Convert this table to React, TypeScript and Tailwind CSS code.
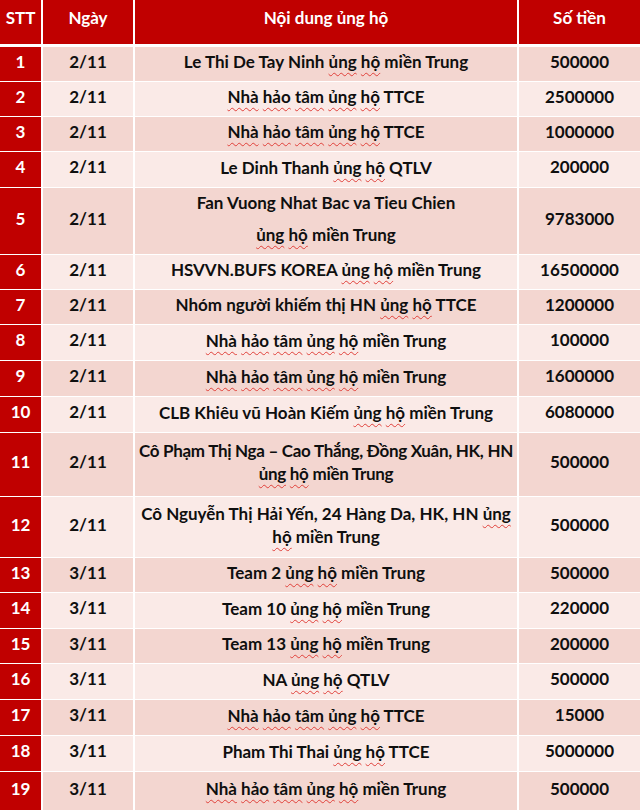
import React from "react";

type Row = { stt: string; date: string; lines: string[]; amount: string; h: number; spaced?: boolean; tight?: boolean };

const rows: Row[] = [
  { stt: "1", date: "2/11", lines: ["Le Thi De Tay Ninh ủng hộ miền Trung"], amount: "500000", h: 34 },
  { stt: "2", date: "2/11", lines: ["Nhà hảo tâm ủng hộ TTCE"], amount: "2500000", h: 34 },
  { stt: "3", date: "2/11", lines: ["Nhà hảo tâm ủng hộ TTCE"], amount: "1000000", h: 34 },
  { stt: "4", date: "2/11", lines: ["Le Dinh Thanh ủng hộ QTLV"], amount: "200000", h: 35 },
  { stt: "5", date: "2/11", lines: ["Fan Vuong Nhat Bac va Tieu Chien", "ủng hộ miền Trung"], amount: "9783000", h: 66, spaced: true },
  { stt: "6", date: "2/11", lines: ["HSVVN.BUFS KOREA ủng hộ miền Trung"], amount: "16500000", h: 34 },
  { stt: "7", date: "2/11", lines: ["Nhóm người khiếm thị HN ủng hộ TTCE"], amount: "1200000", h: 34 },
  { stt: "8", date: "2/11", lines: ["Nhà hảo tâm ủng hộ miền Trung"], amount: "100000", h: 35 },
  { stt: "9", date: "2/11", lines: ["Nhà hảo tâm ủng hộ miền Trung"], amount: "1600000", h: 35 },
  { stt: "10", date: "2/11", lines: ["CLB Khiêu vũ Hoàn Kiếm ủng hộ miền Trung"], amount: "6080000", h: 35 },
  { stt: "11", date: "2/11", lines: ["Cô Phạm Thị Nga – Cao Thắng, Đồng Xuân, HK, HN", "ủng hộ miền Trung"], amount: "500000", h: 63, tight: true },
  { stt: "12", date: "2/11", lines: ["Cô Nguyễn Thị Hải Yến, 24 Hàng Da, HK, HN ủng", "hộ miền Trung"], amount: "500000", h: 60 },
  { stt: "13", date: "3/11", lines: ["Team 2 ủng hộ miền Trung"], amount: "500000", h: 34 },
  { stt: "14", date: "3/11", lines: ["Team 10 ủng hộ miền Trung"], amount: "220000", h: 35 },
  { stt: "15", date: "3/11", lines: ["Team 13 ủng hộ miền Trung"], amount: "200000", h: 34 },
  { stt: "16", date: "3/11", lines: ["NA ủng hộ QTLV"], amount: "500000", h: 35 },
  { stt: "17", date: "3/11", lines: ["Nhà hảo tâm ủng hộ TTCE"], amount: "15000", h: 35 },
  { stt: "18", date: "3/11", lines: ["Pham Thi Thai ủng hộ TTCE"], amount: "5000000", h: 35 },
  { stt: "19", date: "3/11", lines: ["Nhà hảo tâm ủng hộ miền Trung"], amount: "500000", h: 38 },
];

const wavy = new Set(["Nhà", "hảo", "tâm", "ủng", "hộ"]);

function Line({ text }: { text: string }) {
  const words = text.split(" ");
  return (
    <span className="whitespace-nowrap">
      {words.map((w, i) => (
        <React.Fragment key={i}>
          {wavy.has(w) ? (
            <span className="underline decoration-wavy decoration-[#e0403a] decoration-[1px] underline-offset-[4px]">{w}</span>
          ) : (
            <span>{w}</span>
          )}
          {i < words.length - 1 ? " " : ""}
        </React.Fragment>
      ))}
    </span>
  );
}

export default function App() {
  return (
    <div
      className="w-[640px] h-[810px] bg-white overflow-hidden flex flex-col gap-[1px] text-[17px] font-bold text-[#0f0f0f]"
      style={{ fontFamily: "Lato, 'Liberation Sans', sans-serif" }}
    >
      <div className="grid grid-cols-[41px_90px_382px_1fr] gap-x-[2px] h-[44px] mb-[2px] shrink-0 text-white">
        <div className="bg-[#c00000] flex justify-center pt-[5px]">STT</div>
        <div className="bg-[#c00000] flex justify-center pt-[5px]">Ngày</div>
        <div className="bg-[#c00000] flex justify-center pt-[5px]">Nội dung ủng hộ</div>
        <div className="bg-[#c00000] flex justify-center pt-[5px]">Số tiền</div>
      </div>
      {rows.map((r, idx) => {
        const bg = idx % 2 === 0 ? "bg-[#f3d6d0]" : "bg-[#faeae7]";
        return (
          <div key={r.stt} className="grid grid-cols-[41px_90px_382px_1fr] gap-x-[2px] shrink-0" style={{ height: r.h }}>
            <div className="bg-[#c00000] text-white flex items-center justify-center pb-[5px]">{r.stt}</div>
            <div className={`${bg} flex items-center justify-center pb-[5px]`}>{r.date}</div>
            <div
              className={`${bg} flex flex-col items-center justify-center text-center pb-[5px] ${
                r.spaced ? "gap-[8px] leading-[24px]" : "leading-[23px]"
              } ${r.tight ? "tracking-[-0.3px]" : ""}`}
            >
              {r.lines.map((l, i) => (
                <Line key={i} text={l} />
              ))}
            </div>
            <div className={`${bg} flex items-center justify-center pb-[5px]`}>{r.amount}</div>
          </div>
        );
      })}
    </div>
  );
}
